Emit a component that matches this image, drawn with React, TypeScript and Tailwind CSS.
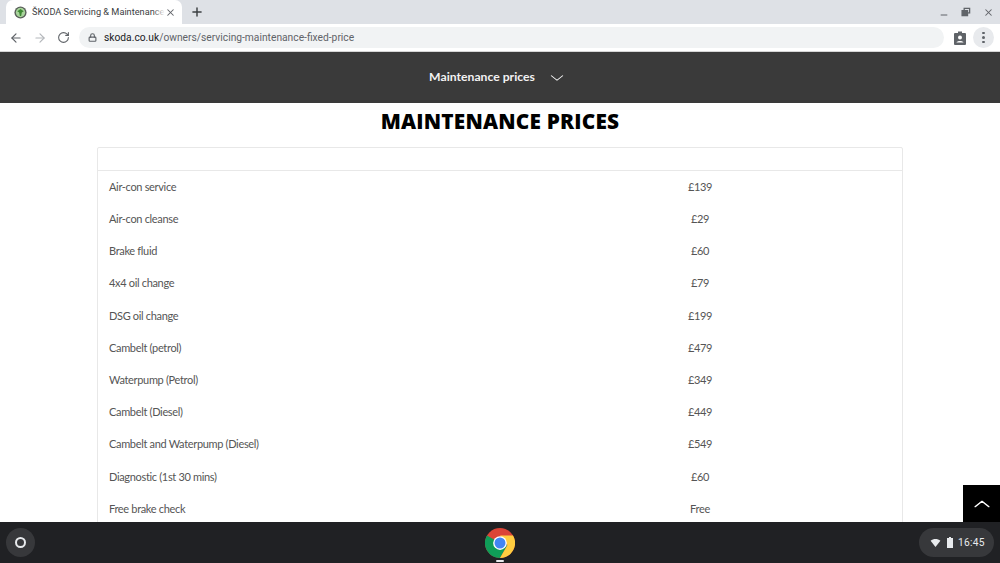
import { ArrowLeft, ArrowRight, RotateCw, Lock, Plus, X, ChevronDown, ChevronUp, Minus } from "lucide-react";

const prices = [
    ["Air-con service", "£139"],
    ["Air-con cleanse", "£29"],
    ["Brake fluid", "£60"],
    ["4x4 oil change", "£79"],
    ["DSG oil change", "£199"],
    ["Cambelt (petrol)", "£479"],
    ["Waterpump (Petrol)", "£349"],
    ["Cambelt (Diesel)", "£449"],
    ["Cambelt and Waterpump (Diesel)", "£549"],
    ["Diagnostic (1st 30 mins)", "£60"],
    ["Free brake check", "Free"],
];

const ChromeLogo = () => (
    <svg width="30" height="30" viewBox="0 0 48 48">
        <circle cx="24" cy="24" r="24" fill="#db4437" />
        <path d="M24 24 L3.2 12 A24 24 0 0 0 24 48 L36 27.2 Z" fill="#0f9d58" />
        <path d="M24 12 H44.8 A24 24 0 0 1 24 48 L36 27.2 Z" fill="#ffcd40" />
        <circle cx="24" cy="24" r="11" fill="#fff" />
        <circle cx="24" cy="24" r="8.8" fill="#4285f4" />
    </svg>
);

const SkodaFavicon = () => (
    <svg width="13" height="13" viewBox="0 0 12 12" className="shrink-0">
        <circle cx="6" cy="6" r="5.6" fill="#5a5f5a" />
        <circle cx="6" cy="6" r="4.3" fill="#a9d59c" />
        <path d="M3 4.8 L6 2.8 L9 4.8 L7.2 6 L6.6 9.2 L5.4 9.2 L4.8 6 Z" fill="#3f8a34" />
    </svg>
);

const Tab = () => (
    <div className="ml-[6px] w-[176px] h-full bg-white rounded-t-[7px] flex items-center pl-[8px] pr-[6px]">
        <SkodaFavicon />
        <span className="relative ml-[5px] flex-1 min-w-0 whitespace-nowrap text-[9.2px] text-[#3c4043] font-['Roboto',sans-serif]">
            ŠKODA Servicing &amp; Maintenance
            <span className="absolute right-0 top-0 bottom-0 w-[12px] bg-gradient-to-r from-transparent to-white" />
        </span>
        <X size={11} strokeWidth={2.2} className="shrink-0 text-[#5f6368]" />
    </div>
);

const BrowserChrome = () => (
    <div className="shrink-0">
        <div className="h-[24px] bg-[#dee1e6] flex items-center">
            <Tab />
            <Plus size={14} strokeWidth={2.5} className="ml-[8px] text-[#3c4043]" />
            <div className="ml-auto flex items-center gap-[12px] pr-[6px] text-[#5f6368]">
                <Minus size={10} strokeWidth={2.4} className="mt-[5px]" />
                <svg width="10" height="10" viewBox="0 0 11 11" fill="none" stroke="currentColor" strokeWidth="1.4">
                    <rect x="3.5" y="1.5" width="6" height="5" />
                    <rect x="1.2" y="4" width="6" height="5.5" fill="currentColor" />
                </svg>
                <X size={11} strokeWidth={2.2} />
            </div>
        </div>
        <div className="h-[27px] bg-white flex items-center">
            <ArrowLeft size={14} strokeWidth={2} className="ml-[9px] text-[#5f6368]" />
            <ArrowRight size={14} strokeWidth={2} className="ml-[10px] text-[#b4b7bb]" />
            <RotateCw size={13} strokeWidth={2} className="ml-[10px] text-[#5f6368]" />
            <div className="ml-[9px] w-[865px] h-[21px] rounded-full bg-[#f1f3f4] flex items-center pl-[9px] text-[10.25px] font-['Roboto',sans-serif]">
                <Lock size={9} strokeWidth={3} className="text-[#5f6368]" />
                <span className="ml-[7px] text-[#202124]">skoda.co.uk</span>
                <span className="text-[#5f6368]">/owners/servicing-maintenance-fixed-price</span>
            </div>
            <svg width="12" height="14" viewBox="0 0 12 14" className="ml-[10px]">
                <path d="M1 2 H4 V0.5 H8 V2 H11 A1 1 0 0 1 12 3 V13 A1 1 0 0 1 11 14 H1 A1 1 0 0 1 0 13 V3 A1 1 0 0 1 1 2 Z" fill="#5f6368" />
                <circle cx="6" cy="6.5" r="2" fill="#fff" />
                <path d="M2.5 11.5 C3 9.5 9 9.5 9.5 11.5 Z" fill="#fff" />
            </svg>
            <div className="ml-[7px] w-[21px] h-[21px] rounded-full bg-[#e8eaed] flex flex-col items-center justify-center gap-[2px]">
                <span className="w-[2.5px] h-[2.5px] rounded-full bg-[#5f6368]" />
                <span className="w-[2.5px] h-[2.5px] rounded-full bg-[#5f6368]" />
                <span className="w-[2.5px] h-[2.5px] rounded-full bg-[#5f6368]" />
            </div>
        </div>
    </div>
);

const Shelf = () => (
    <div className="shrink-0 h-[41px] bg-[#202124] flex items-center justify-between px-[6px] relative">
        <div className="w-[29px] h-[29px] rounded-full bg-[#37383b] flex items-center justify-center">
            <span className="w-[11px] h-[11px] rounded-full border-2 border-[#e8eaed]" />
        </div>
        <div className="absolute left-[485px] top-[6px] flex flex-col items-center">
            <ChromeLogo />
            <span className="mt-[2px] w-[8px] h-[2px] rounded-full bg-[#e8eaed]" />
        </div>
        <div className="w-[75px] h-[29px] rounded-full bg-[#37383b] flex items-center pl-[11px] text-[#e8eaed]">
            <svg width="11" height="8" viewBox="0 0 11 9" fill="currentColor">
                <path d="M0 2 C3 -0.6 8 -0.6 11 2 L5.5 9 Z" />
            </svg>
            <svg width="6" height="11" viewBox="0 0 6 11" fill="currentColor" className="ml-[6px]">
                <path d="M2 0 H4 V1 H6 V11 H0 V1 H2 Z" />
            </svg>
            <span className="ml-[5px] text-[10.2px] tracking-[0.3px] font-['Roboto',sans-serif]">16:45</span>
        </div>
    </div>
);

export default function App() {
    return (
        <div className="w-[1000px] h-[563px] flex flex-col overflow-hidden bg-white font-['Lato',sans-serif]">
            <BrowserChrome />
            <div className="flex-1 min-h-0 relative overflow-hidden border-t border-[#d5d5d5]">
                <div className="h-[51px] bg-[#3a3a3a] flex items-center justify-center pr-[5px] text-[#f2f2f2]">
                    <span className="text-[12.2px] font-bold">Maintenance prices</span>
                    <ChevronDown size={18} strokeWidth={1.2} className="ml-[13px] scale-x-125" />
                </div>
                <h1 className="mt-[4px] h-[28px] text-center text-[20.8px] leading-[28px] font-extrabold font-['Open_Sans',sans-serif] text-black tracking-[0.2px]">
                    MAINTENANCE PRICES
                </h1>
                <div className="mx-[97px] mt-[12px] border border-[#e8e8e8] rounded-t-[2px]">
                    <div className="h-[23px] border-b border-[#e8e8e8]" />
                    <div>
                        {prices.map(([name, price]) => (
                            <div key={name} className="h-[32.2px] flex items-center text-[11px] tracking-[-0.33px] text-[#555555]">
                                <span className="ml-[11px] w-[491px]">{name}</span>
                                <span className="w-[200px] text-center">{price}</span>
                            </div>
                        ))}
                    </div>
                </div>
                <div className="absolute right-0 bottom-0 w-[37px] h-[37px] bg-black flex items-center justify-center text-white">
                    <ChevronUp size={22} strokeWidth={1.2} className="scale-x-125" />
                </div>
            </div>
            <Shelf />
        </div>
    );
}
